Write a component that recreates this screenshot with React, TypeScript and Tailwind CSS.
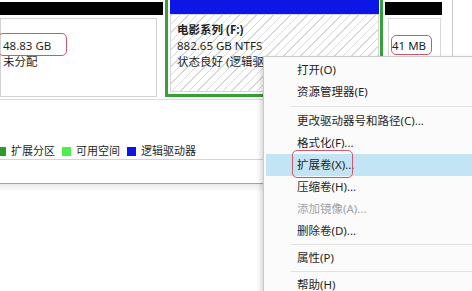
import * as React from 'react';

type MenuEntry = { label: string; disabled?: boolean; active?: boolean } | 'sep';

const menu: MenuEntry[] = [
  { label: '打开(O)' },
  { label: '资源管理器(E)' },
  'sep',
  { label: '更改驱动器号和路径(C)...' },
  { label: '格式化(F)...' },
  { label: '扩展卷(X)...', active: true },
  { label: '压缩卷(H)...' },
  { label: '添加镜像(A)...', disabled: true },
  { label: '删除卷(D)...' },
  'sep',
  { label: '属性(P)' },
  'sep',
  { label: '帮助(H)' },
];

const legend = [
  { color: 'bg-[#2f9a2f]', label: '扩展分区' },
  { color: 'bg-[#4cf04c]', label: '可用空间' },
  { color: 'bg-[#0c16e0]', label: '逻辑驱动器' },
];

export default function App() {
  return (
    <div className="relative h-[291px] w-[472px] overflow-hidden bg-white font-['Noto_Sans','Noto_Sans_CJK_SC',sans-serif] text-[#1f1f1f]">
      {/* disk row */}
      <div className="flex h-[97px] items-start text-[11.5px] leading-[16px]">
        <div className="w-[165px] shrink-0 pt-[2px]">
          <div className="h-[13px] w-[163px] bg-black" />
          <div className="mt-[3px] h-[79px] w-[157px] border border-[#d2d2d2] pl-[2px] pt-[19px]">
            <div>48.83 GB</div>
            <div>未分配</div>
          </div>
        </div>

        <div className="flex h-[97px] w-[218px] shrink-0 flex-col border-x-[3px] border-b-[3px] border-[#38a038] pb-[2px] pl-[2px] pr-[1px]">
          <div className="h-[14px] bg-[#0c16e6]" />
          <div className="flex-1 overflow-hidden whitespace-nowrap border border-[#d6d6d6] bg-[repeating-linear-gradient(135deg,#d9d9d9_0px,#d9d9d9_1px,#ffffff_1px,#ffffff_6px)] pl-[6px] pt-[7px]">
            <div className="font-bold">电影系列 (F:)</div>
            <div>882.65 GB NTFS</div>
            <div>状态良好 (逻辑驱动器)</div>
          </div>
        </div>

        <div className="ml-[2px] w-[60px] shrink-0 pt-[2px]">
          <div className="h-[13px] w-[57px] bg-black" />
          <div className="ml-[3px] mt-[3px] h-[79px] w-[53px] border border-[#d8d8d8] pl-[3px] pt-[19px]">
            <div>41 MB</div>
          </div>
        </div>

        <div className="ml-[7px] h-[97px] w-px bg-[#c8c8c8]" />
      </div>
      <div className="mt-[2px] h-px bg-[#dadada]" />

      {/* legend */}
      <div className="-ml-[3px] mt-[44px] flex h-[14px] items-center text-[11px] leading-[14px]">
        {legend.map((item, i) => (
          <div key={item.label} className={`flex items-center gap-[5px] ${i > 0 ? 'ml-[7px]' : ''}`}>
            <div className={`h-[9px] w-[9px] ${item.color}`} />
            <span>{item.label}</span>
          </div>
        ))}
      </div>
      <div className="mt-px h-px bg-[#d4d4d4]" />
      <div className="mt-[23px] h-px bg-[#a4a4a4]" />
      <div className="h-[8px] bg-linear-to-b from-[#ebebeb] to-white" />

      {/* outlines */}
      <div className="absolute left-[-2px] top-[33px] h-[23px] w-[69px] rounded-[5px] border-[1.5px] border-[#c95a6e]" />
      <div className="absolute left-[391px] top-[35px] h-[20px] w-[41px] rounded-[5px] border-[1.5px] border-[#c95a6e]" />

      {/* context menu */}
      <div className="absolute left-[263px] top-[56px] h-[250px] w-[230px] border border-[#cacaca] bg-[#fbfbfb] p-[2px] text-[11.5px] shadow-[-2px_2px_5px_rgba(0,0,0,0.18)]">
        {menu.map((entry, i) =>
          entry === 'sep' ? (
            <div key={i} className={`${i === 2 ? 'py-[3px]' : 'py-[2px]'} pl-[25px]`}>
              <div className="h-px bg-[#e2e2e2]" />
            </div>
          ) : (
            <div
              key={i}
              className={`h-[22px] whitespace-nowrap pl-[31px] leading-[22px] ${entry.active ? 'bg-[#c3e4f5]' : ''} ${entry.disabled ? 'text-[#a2a2a2]' : ''}`}
            >
              {entry.label}
            </div>
          ),
        )}
      </div>
      <div className="absolute left-[292px] top-[150px] h-[28px] w-[61px] rounded-[5px] border-[1.5px] border-[#c95a6e]" />
    </div>
  );
}
